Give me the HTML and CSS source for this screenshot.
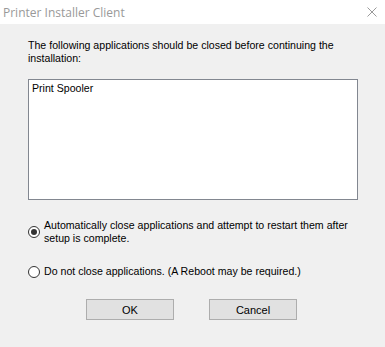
FILE: index.html
```html
<!DOCTYPE html>
<html lang="en">
<head>
  <meta charset="UTF-8">
  <title>Printer Installer Client</title>
  <link rel="stylesheet" href="styles.css">
</head>
<body>
  <div class="ventana">
    <div class="titulo">
      <span>Printer Installer Client</span>
      <svg class="cerrar" width="10" height="10" viewBox="0 0 10 10">
        <path d="M0.5 0.5 L9.5 9.5 M9.5 0.5 L0.5 9.5" stroke="#9a9a9a" stroke-width="1" fill="none"/>
      </svg>
    </div>

    <div class="contenido">
      <p class="aviso">The following applications should be closed before continuing the installation:</p>

      <div class="lista">
        <div>Print Spooler</div>
      </div>

      <label class="opcion">
        <span class="radio marcado"></span>
        <span>Automatically close applications and attempt to restart them after setup is complete.</span>
      </label>

      <label class="opcion segunda">
        <span class="radio"></span>
        <span>Do not close applications. (A Reboot may be required.)</span>
      </label>

      <div class="botones">
        <button>OK</button>
        <button>Cancel</button>
      </div>
    </div>
  </div>
</body>
</html>
```

FILE: styles.css
```css
body {
  margin: 0;
  font-family: "Liberation Sans", Arial, sans-serif;
  font-size: 10.6px;
  color: #000;
  background: #f0f0f0;
}
.ventana {
  width: 385px;
  height: 347px;
  background: #f0f0f0;
}
.titulo {
  height: 24px;
  background: #fff;
  display: flex;
  align-items: center;
  justify-content: space-between;
  padding: 0 8px 0 3px;
  font-family: "Open Sans", "Noto Sans", sans-serif;
  font-size: 12px;
  color: #999;
}
.contenido {
  padding: 15px 28px 0 28px;
}
.aviso {
  margin: 0;
  line-height: 13px;
  width: 320px;
}
.lista {
  margin-top: 14px;
  width: 322px;
  height: 117px;
  border: 1px solid #828790;
  background: #fff;
  padding: 2px 3px 0 3px;
  line-height: 13px;
}
.opcion {
  display: flex;
  align-items: center;
  gap: 4px;
  margin-top: 19px;
  line-height: 13px;
  width: 329px;
}
.segunda {
  margin-top: 20px;
}
.radio {
  flex: none;
  width: 10px;
  height: 10px;
  border: 1px solid #333;
  border-radius: 50%;
  background: #fff;
  position: relative;
}
.marcado::after {
  content: "";
  position: absolute;
  left: 2px;
  top: 2px;
  width: 6px;
  height: 6px;
  border-radius: 50%;
  background: #333;
}
.botones {
  display: flex;
  gap: 35px;
  margin: 21px 0 0 58px;
}
.botones button {
  width: 88px;
  height: 21px;
  border: 1px solid #adadad;
  background: #e1e1e1;
  font-family: "Liberation Sans", Arial, sans-serif;
  font-size: 11px;
  color: #000;
  padding: 0;
}
```
